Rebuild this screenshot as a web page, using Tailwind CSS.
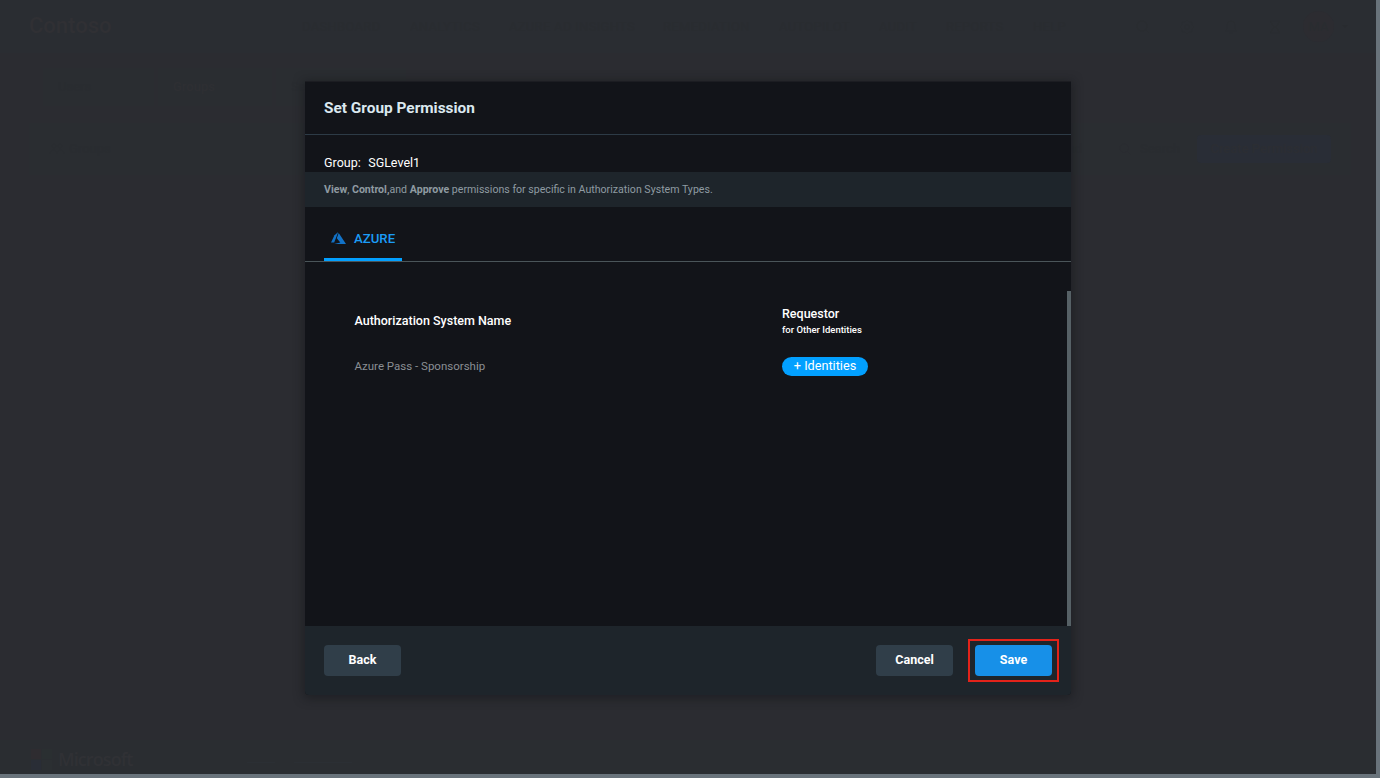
<!DOCTYPE html>
<html lang="en">
<head>
<meta charset="utf-8">
<title>Set Group Permission</title>
<script src="https://cdn.jsdelivr.net/npm/@tailwindcss/browser@4"></script>
</head>
<body class="w-[1380px] h-[778px] overflow-hidden bg-[#69737b] font-['Roboto',sans-serif]">
<div class="relative w-[1376px] h-[774px] bg-[#2b2c31] overflow-hidden flex flex-col text-[#292c30]">
  <header class="h-[53px] shrink-0 bg-[#2a2d32] flex items-center pl-[29px] text-[13px] whitespace-nowrap">
    <div class="w-[273px] pb-[3px] text-[22px] font-medium text-[#303034]">Contoso</div>
    <nav class="flex tracking-[0.3px]">
      <span class="w-[108px]">DASHBOARD</span>
      <span class="w-[99px]">ANALYTICS</span>
      <span class="w-[154px]">AZURE AD INSIGHTS</span>
      <span class="w-[116px]">REMEDIATION</span>
      <span class="w-[100px]">AUTOPILOT</span>
      <span class="w-[67px]">AUDIT</span>
      <span class="w-[87px]">REPORTS</span>
      <span class="w-[102px]">HELP</span>
    </nav>
    <div class="flex items-center">
      <svg class="w-4 h-4 mr-7" viewBox="0 0 16 16" fill="none" stroke="currentColor"><circle cx="7" cy="7" r="5"/><path d="M11 11l3 3"/></svg>
      <svg class="w-4 h-4 mr-7" viewBox="0 0 16 16" fill="none" stroke="currentColor"><path d="M8 1l2 2 3 0 0 3 2 2-2 2 0 3-3 0-2 2-2-2-3 0 0-3-2-2 2-2 0-3 3 0z"/><circle cx="8" cy="8" r="2.5"/></svg>
      <svg class="w-4 h-4 mr-7" viewBox="0 0 16 16" fill="none" stroke="currentColor"><path d="M2 12h12l-2-2V6a4 4 0 0 0-8 0v4zM6.500 14h3"/></svg>
      <svg class="w-4 h-4 mr-5" viewBox="0 0 16 16" fill="none" stroke="currentColor"><path d="M3 2h10M3 14h10M4 2c0 4 3 4 3 6s-3 2-3 6M12 2c0 4-3 4-3 6s3 2 3 6"/></svg>
      <div class="w-[31px] h-[31px] rounded-full bg-[#2c2c31] flex items-center justify-center">MA</div>
      <div class="ml-2 border-x-[3px] border-t-[3px] border-x-transparent border-t-[#282b2f]"></div>
    </div>
  </header>
  <div class="mt-[15px] ml-[43px] flex gap-1 h-[38px] text-[13px]">
    <div class="w-[111px] bg-[#2a2d31] flex items-center pl-[15px]">Users</div>
    <div class="w-[114px] bg-[#2a2d31] flex items-center pl-[15px] font-medium text-[#2e2f33]">Groups</div>
    <div class="w-[130px] bg-[#2a2d31] flex items-center pl-[15px]">Settings</div>
  </div>
  <div class="mt-[17px] ml-[29px] w-[1322px] h-[52px] bg-[#2a2d31] flex items-center pl-5 pr-5 text-[13px]">
    <svg class="w-4 h-4" viewBox="0 0 16 16" fill="none" stroke="currentColor"><circle cx="5" cy="5" r="2"/><circle cx="11" cy="5" r="2"/><path d="M1 13c0-5 7-5 7 0M8 13c0-5 7-5 7 0"/></svg>
    <span class="ml-1">Groups</span>
    <div class="ml-auto flex items-center">
      <span>Reload</span>
      <svg class="w-3.5 h-3.5 ml-9" viewBox="0 0 16 16" fill="none" stroke="currentColor"><circle cx="7" cy="7" r="5"/><path d="M11 11l3 3"/></svg>
      <span class="ml-2 w-[57px]">Search</span>
      <span class="w-[134px] h-7 rounded-sm bg-[#292d36] flex items-center justify-center whitespace-nowrap text-[#2c2e33] font-medium">Create Permission</span>
    </div>
  </div>
  <footer class="mt-auto h-[34px] bg-[#2a2d31] flex items-center pl-[31px]">
    <div class="grid grid-cols-2 gap-px w-[21px] h-[21px] mt-1">
      <i class="bg-[#2e2c30]"></i><i class="bg-[#2a2f31]"></i><i class="bg-[#292d36]"></i><i class="bg-[#2b2f32]"></i>
    </div>
    <span class="ml-[6px] w-[74px] text-[18px] leading-5 mt-1 font-semibold font-['Open_Sans',sans-serif] tracking-[-0.9px] text-[#303135]">Microsoft</span>
    <i class="ml-[115px] mt-2.5 w-7 h-px bg-[#2b2f34]"></i>
    <i class="ml-[19px] mt-2.5 w-[58px] h-px bg-[#2b2f34]"></i>
  </footer>

  <!-- Dialog -->
  <section class="absolute left-[305px] top-[81px] w-[766px] h-[614px] rounded-b-[4px] bg-[#121419] shadow-[0_2px_10px_2px_rgba(20,22,26,0.5)] flex flex-col overflow-hidden border-t border-[#1c1d22]">
    <div class="h-[53px] shrink-0 border-b border-[#2d3b46] flex items-center pl-[19px]">
      <h1 class="text-[15.400px] leading-5 font-bold text-[#dbe8ef]">Set Group Permission</h1>
    </div>
    <div class="h-[37px] shrink-0 pl-[19px] pt-[19px] text-[12.500px] leading-[18px] text-white flex gap-[7.500px]"><span>Group:</span><span>SGLevel1</span></div>
    <p class="h-[35px] shrink-0 bg-[#1e252b] pl-[19px] text-[10.600px] leading-[35px] text-[#8f9ba2] whitespace-nowrap"><b>View</b>, <b>Control,</b>and <b>Approve</b> permissions for specific in Authorization System Types.</p>
    <div class="h-[55px] shrink-0 border-b border-[#4a5559] pl-[19px] flex items-end">
      <div class="w-[78px] h-[43px] border-b-[3px] border-[#02a0ff] flex items-center pl-[7px] text-[#1b9cf6]">
        <svg class="w-[15px] h-[12px] shrink-0" viewBox="0 0 15 12" fill="#1273c8"><path d="M7.200 0L3.500 3.200L0 10.500H3.200z"/><path d="M7.700 1L5.800 6.200L9.300 10.500L3.200 11.900H15z"/></svg>
        <span class="ml-[8px] pt-px text-[13.200px] font-medium">AZURE</span>
      </div>
    </div>
    <div class="flex-1 flex justify-between pt-[29px]">
      <div class="pl-[49.500px] text-[12.500px] leading-4 text-white">
        <div class="flex">
          <div class="w-[427.500px] pt-[22px] font-medium">Authorization System Name</div>
          <div class="pt-[15px] font-medium">Requestor<div class="text-[9.500px] leading-4">for Other Identities</div></div>
        </div>
        <div class="flex items-center mt-[19px] h-[19px]">
          <div class="w-[427.500px] pb-0.5 text-[11.500px] text-[#8a8f94]">Azure Pass - Sponsorship</div>
          <button class="w-[86px] h-[19px] pb-0.5 rounded-full bg-[#02a0ff] text-[12.700px] leading-[17px]">+ Identities</button>
        </div>
      </div>
      <div class="w-[4px] bg-[#566166]"></div>
    </div>
    <div class="h-[69px] shrink-0 bg-[#1e252b] flex items-center px-[19px] text-[12.500px] font-bold text-white">
      <button class="w-[77px] h-[31px] rounded-[4px] bg-[#303e49]">Back</button>
      <button class="ml-auto w-[77px] h-[31px] rounded-[4px] bg-[#303e49]">Cancel</button>
      <div class="ml-[15px] -mr-[7px] w-[91px] h-[43px] border-2 border-[#e3231a] flex items-center justify-center">
        <button class="w-[77px] h-[31px] rounded-[4px] bg-[#1790e8]">Save</button>
      </div>
    </div>
  </section>
</div>
</body>
</html>
